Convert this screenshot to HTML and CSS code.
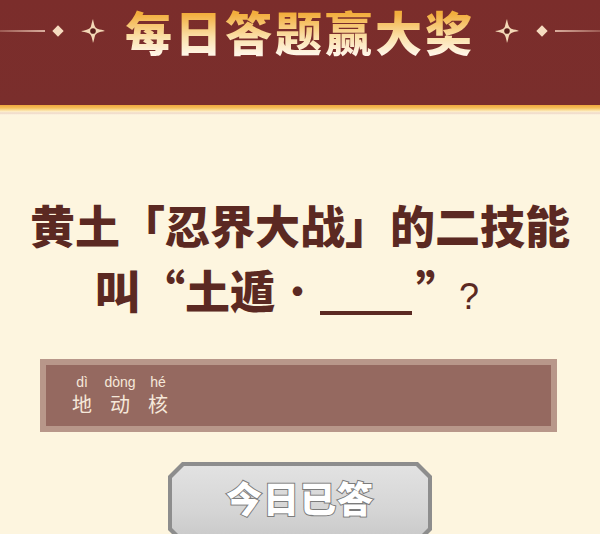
FILE: index.html
```html
<!DOCTYPE html>
<html lang="zh">
<head>
<meta charset="utf-8">
<title>每日答题赢大奖</title>
<link rel="stylesheet" href="styles.css">
</head>
<body>
<header class="header">
  <div class="title-row">
    <span class="rule rule-left"></span>
    <span class="diamond"></span>
    <svg class="star" viewBox="-12 -12 24 24" width="26" height="26" aria-hidden="true">
      <path d="M0 -11 C1 -5 2 -3 4 -2 C7 -1 9 -1 11 0 C5 1 3 2 2 4 C1 7 1 9 0 11 C-1 5 -2 3 -4 2 C-7 1 -9 1 -11 0 C-5 -1 -3 -2 -2 -4 C-1 -7 -1 -9 0 -11 Z" fill="#f3d8b6"/>
      <circle cx="0" cy="0" r="2.6" fill="#5a1f1c"/>
    </svg>
    <h1 class="title">每日答题赢大奖</h1>
    <svg class="star" viewBox="-12 -12 24 24" width="26" height="26" aria-hidden="true">
      <path d="M0 -11 C1 -5 2 -3 4 -2 C7 -1 9 -1 11 0 C5 1 3 2 2 4 C1 7 1 9 0 11 C-1 5 -2 3 -4 2 C-7 1 -9 1 -11 0 C-5 -1 -3 -2 -2 -4 C-1 -7 -1 -9 0 -11 Z" fill="#f3d8b6"/>
      <circle cx="0" cy="0" r="2.6" fill="#5a1f1c"/>
    </svg>
    <span class="diamond"></span>
    <span class="rule rule-right"></span>
  </div>
</header>
<div class="band"></div>
<main class="content">
  <p class="question">
    <span class="line">黄土「忍界大战」的二技能</span>
    <span class="line line2">叫“土遁<span class="dot">·</span><span class="blank"></span><span class="rq">”</span><span class="qmark">?</span></span>
  </p>
  <div class="answer">
    <div class="answer-inner">
      <div class="word"><span class="py">dì</span><span class="hz">地</span></div>
      <div class="word"><span class="py">dòng</span><span class="hz">动</span></div>
      <div class="word"><span class="py">hé</span><span class="hz">核</span></div>
    </div>
  </div>
  <div class="btn">
    <div class="btn-inner"><span class="btn-text">今日已答</span></div>
  </div>
</main>
</body>
</html>
```
FILE: styles.css
```css
* { box-sizing: border-box; }
html, body { margin: 0; padding: 0; }
body {
  width: 600px;
  height: 534px;
  overflow: hidden;
  background: #fdf5df;
  font-family: "Noto Sans CJK SC", "Noto Sans", sans-serif;
}
.header {
  height: 105px;
  background: linear-gradient(180deg, #7b2d2b 0%, #7a2e2c 100%);
  padding-top: 2px;
}
.title-row {
  display: flex;
  align-items: center;
  height: 58px;
}
.rule {
  flex: 1;
  height: 2px;
}
.rule-left { background: linear-gradient(90deg, rgba(230,190,170,0.3), rgba(240,205,185,0.8)); }
.rule-right { background: linear-gradient(90deg, rgba(240,205,185,0.8), rgba(230,190,170,0.3)); }
.diamond {
  width: 8px;
  height: 8px;
  background: #f6dcc0;
  transform: rotate(45deg);
  margin: 0 9px;
}
.star { margin: 0 9px; flex: none; }
.title {
  flex: none;
  margin: 0 10px;
  padding: 2px 0;
  font-size: 47px;
  font-weight: 900;
  letter-spacing: 3px;
  line-height: 54px;
  background: linear-gradient(180deg, #f2ad3c 20%, #fbe0a8 60%, #fff5e6 90%);
  -webkit-background-clip: text;
  background-clip: text;
  color: transparent;
  white-space: nowrap;
}
.band {
  height: 10px;
  background: linear-gradient(180deg, #efa73c 0px, #f5bf5c 3px, #fbdc95 5px, #fdf1d6 7px, #ead2c2 8px, #f8ead8 9px, #fdf5df 10px);
}
.content {
  padding-top: 77px;
}
.question {
  margin: 0;
  color: #5b2922;
  font-size: 45px;
  font-weight: 800;
  line-height: 65px;
  text-align: center;
}
.line { display: block; white-space: nowrap; }
.line2 { text-align: left; padding-left: 95px; }
.dot { font-weight: 400; }
.blank {
  display: inline-block;
  width: 92px;
  height: 4px;
  background: #5b2922;
  vertical-align: -6px;
  margin: 0 4px 0 0;
}
.rq { margin-right: -6px; }
.qmark {
  font-family: "Liberation Sans", sans-serif;
  font-weight: 400;
  font-size: 36px;
  margin-left: 4px;
}
.answer {
  margin: 30px 43px 0 40px;
  height: 73px;
  border: 6px solid #b8978a;
  background: #956960;
}
.answer-inner {
  display: flex;
  gap: 14px;
  padding: 9px 0 0 24px;
}
.word {
  display: flex;
  flex-direction: column;
  align-items: center;
  width: 24px;
  color: #f5e8da;
}
.py {
  font-family: "Liberation Sans", sans-serif;
  font-size: 14px;
  line-height: 16px;
  white-space: nowrap;
}
.hz {
  font-size: 20px;
  line-height: 28px;
  font-weight: 400;
}
.btn {
  width: 264px;
  height: 82px;
  margin: 30px auto 0;
  padding: 4px;
  background: #8d8d8d;
  clip-path: polygon(14px 0, calc(100% - 14px) 0, 100% 14px, 100% calc(100% - 14px), calc(100% - 14px) 100%, 14px 100%, 0 calc(100% - 14px), 0 14px);
}
.btn-inner {
  height: 100%;
  background: linear-gradient(180deg, #e2e2e2 0%, #d5d5d5 60%, #c9c9c9 100%);
  clip-path: polygon(12px 0, calc(100% - 12px) 0, 100% 12px, 100% calc(100% - 12px), calc(100% - 12px) 100%, 12px 100%, 0 calc(100% - 12px), 0 12px);
  display: flex;
  justify-content: center;
  padding-top: 6px;
}
.btn-text {
  font-size: 36px;
  font-weight: 900;
  line-height: 50px;
  letter-spacing: 1px;
  color: #ffffff;
  -webkit-text-stroke: 2px #7c7c7c;
  paint-order: stroke fill;
}
```
